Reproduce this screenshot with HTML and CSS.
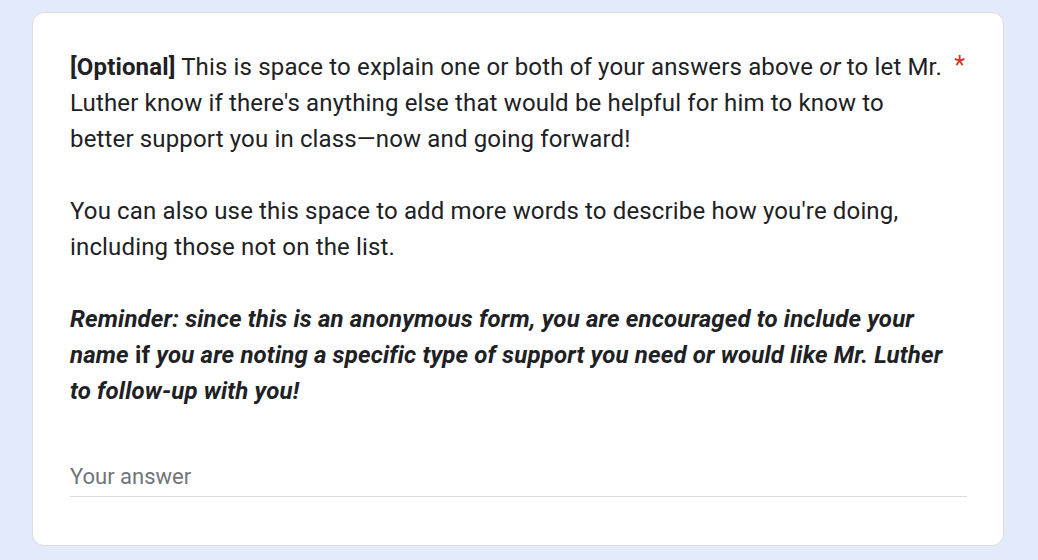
FILE: index.html
```html
<!DOCTYPE html>
<html>
<head>
<meta charset="utf-8">
<link rel="stylesheet" href="styles.css">
</head>
<body>
<div class="page">
  <div class="card">
    <div class="title-row">
      <div class="title">
        <p><b>[Optional]</b> This is space to explain one or both of your answers above <i>or</i> to let Mr. Luther know if there's anything else that would be helpful for him to know to better support you in class—now and going forward!</p>
        <p class="blank">&nbsp;</p>
        <p>You can also use this space to add more words to describe how you're doing, including those not on the list.</p>
        <p class="blank">&nbsp;</p>
        <p class="bi"><b><i>Reminder: since this is an anonymous form, you are encouraged to include your name</i> if <i>you are noting a specific type of support you need or would like Mr. Luther to follow-up with you!</i></b></p>
      </div>
      <span class="req">*</span>
    </div>
    <div class="answer">
      <div class="answer-text">Your answer</div>
    </div>
  </div>
</div>
</body>
</html>
```
FILE: styles.css
```css
html, body {
  margin: 0;
  padding: 0;
  background: #e3ebfa;
}
.page {
  padding: 12px 34px 0 32px;
}
.card {
  background: #fff;
  border: 1px solid #dadce0;
  border-radius: 12px;
  padding: 36px 36px 48px 37px;
  font-family: Roboto, "Liberation Sans", sans-serif;
  color: #202124;
}
.title-row {
  display: flex;
  align-items: flex-start;
}
.title {
  flex: 0 0 880px;
  font-size: 24px;
  line-height: 36px;
  letter-spacing: 0.15px;
}
.title p {
  margin: 0;
}
.title .blank {
  height: 36px;
}
.req {
  color: #d93025;
  font-size: 25px;
  line-height: 34px;
  margin-left: auto;
  margin-right: 2px;
}
.answer {
  margin-top: 53px;
  width: 897px;
  border-bottom: 1px solid #dadce0;
  padding-bottom: 4px;
}
.answer-text {
  color: #70757a;
  font-size: 22px;
  line-height: 30px;
}
```
